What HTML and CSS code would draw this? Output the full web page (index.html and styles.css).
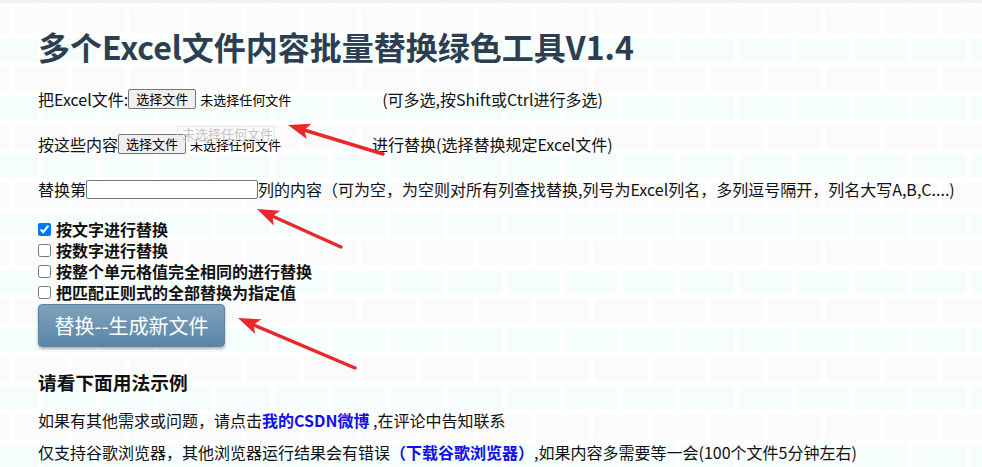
FILE: index.html
```
<!DOCTYPE html>
<html lang="zh-CN">
<head>
    <meta charset="UTF-8">
    <meta name="viewport" content="width=device-width, initial-scale=1.0">
    <title>多个Excel文件内容批量替换绿色工具V1.4</title>
    <link rel="stylesheet" href="styles.css">
</head>
<body>
    <div class="page">
        <h1>多个Excel文件内容批量替换绿色工具V1.4</h1>

        <div class="row row-first">
            把Excel文件:
            <span class="file-input">
                <span class="file-btn">选择文件</span>
                <span class="file-name">未选择任何文件</span>
            </span>
            <span>(可多选,按Shift或Ctrl进行多选)</span>
        </div>

        <div class="row">
            按这些内容
            <span class="file-input">
                <span class="file-btn">选择文件</span>
                <span class="file-name">未选择任何文件</span>
            </span>
            <span>进行替换(选择替换规定Excel文件)</span>
        </div>

        <div class="row">
            替换第<input type="text" class="col-input">列的内容（可为空，为空则对所有列查找替换,列号为Excel列名，多列逗号隔开，列名大写A,B,C....)
        </div>

        <div class="options">
            <label><input type="checkbox" checked>按文字进行替换</label>
            <label><input type="checkbox">按数字进行替换</label>
            <label><input type="checkbox">按整个单元格值完全相同的进行替换</label>
            <label><input type="checkbox">把匹配正则式的全部替换为指定值</label>
        </div>

        <button class="run-btn">替换--生成新文件</button>

        <h3>请看下面用法示例</h3>
        <p class="note">如果有其他需求或问题，请点击<a href="#">我的CSDN微博</a> ,在评论中告知联系</p>
        <p class="note note-2">仅支持谷歌浏览器，其他浏览器运行结果会有错误<a href="#">（下载谷歌浏览器）</a>,如果内容多需要等一会(100个文件5分钟左右)</p>

        <!-- 拖拽残影 -->
        <div class="drag-ghost">未选择任何文件</div>

        <!-- 标注箭头 -->
        <svg class="arrows" width="982" height="467" viewBox="0 0 982 467">
            <g stroke="#e8282b" stroke-width="3.5" stroke-linecap="round" fill="#e8282b">
                <line x1="383" y1="154" x2="304" y2="130"/>
                <polygon stroke="none" points="288,125 311.4,123.8 304.3,130 306.7,139.1"/>
                <line x1="341" y1="247" x2="272" y2="216"/>
                <polygon stroke="none" points="257,209 280.3,210.8 272.5,216 273.7,225.4"/>
                <line x1="355" y1="368" x2="254" y2="325"/>
                <polygon stroke="none" points="238,318 261.4,319.3 253.6,324.7 255.1,334"/>
            </g>
        </svg>
    </div>
</body>
</html>
```

FILE: styles.css
```
* {
    margin: 0;
    padding: 0;
    box-sizing: border-box;
}

html, body {
    height: 100%;
}

body {
    font-family: "Noto Sans CJK SC", "Noto Sans", sans-serif;
    font-size: 16px;
    color: #111;
    background-color: #fff;
    background-image:
        conic-gradient(at 53px 24px, transparent 0 270deg, #fcfbfb 270deg 360deg),
        conic-gradient(at 53px 24px, transparent 0 270deg, #f6fdfd 270deg 360deg);
    background-size: 58px 58px, 58px 58px;
    background-position: 14px 9px, 43px 38px;
    border-top: 3px solid #f1f3f3;
    overflow: hidden;
}

.page {
    position: relative;
    padding-left: 38px;
    height: 100%;
}

h1 {
    font-size: 32px;
    font-weight: bold;
    color: #2c3e50;
    line-height: 48px;
    padding-top: 19px;
}

.row {
    display: flex;
    align-items: center;
    height: 24px;
    margin-top: 21px;
    white-space: nowrap;
}

.row-first {
    margin-top: 17px;
}

.file-input {
    display: inline-flex;
    align-items: center;
    gap: 4px;
    width: 250px;
    margin-right: 4px;
}

.file-btn {
    display: inline-block;
    font-size: 13px;
    line-height: 18px;
    padding: 0 7px;
    background-color: #efefef;
    border: 1px solid #767676;
    border-radius: 2px;
    color: #000;
}

.file-name {
    font-size: 13px;
    color: #000;
}

.col-input {
    width: 172px;
    height: 19px;
    border: 1px solid #767676;
    border-radius: 2px;
    background-color: #fff;
}

.options {
    margin-top: 18px;
}

.options label {
    display: flex;
    align-items: center;
    height: 21px;
    line-height: 21px;
    font-weight: bold;
}

.options input {
    width: 13px;
    height: 13px;
    margin: 0 5px 0 0;
}

.run-btn {
    display: block;
    width: 187px;
    height: 43px;
    margin-top: 1px;
    font-family: inherit;
    font-size: 20px;
    color: #fff;
    background: linear-gradient(#7ea2bb, #5a86a7);
    border: 1px solid #5b82a0;
    border-radius: 4px;
    box-shadow: 0 2px 3px rgba(0,0,0,0.3);
    cursor: pointer;
}

h3 {
    font-size: 18.72px;
    font-weight: bold;
    line-height: 24px;
    margin-top: 23px;
}

.note {
    line-height: 24px;
    margin-top: 14px;
}

.note-2 {
    margin-top: 8px;
}

.note a {
    color: #1010e8;
    font-weight: bold;
    text-decoration: none;
}

.drag-ghost {
    position: absolute;
    left: 177px;
    top: 123px;
    width: 98px;
    height: 16px;
    padding-left: 4px;
    font-size: 13px;
    line-height: 14px;
    color: #c4c4c4;
    border: 1px solid #e6e6e6;
    border-radius: 2px;
    white-space: nowrap;
}

.arrows {
    position: absolute;
    left: 0;
    top: -3px;
    pointer-events: none;
}
```
